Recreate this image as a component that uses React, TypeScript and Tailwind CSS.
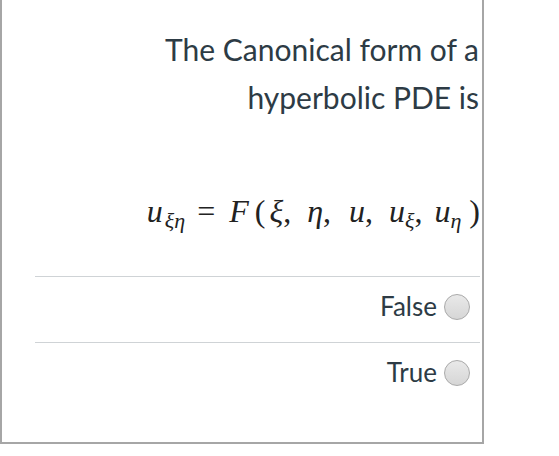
import React from 'react';

const sans = { fontFamily: 'Lato, "Open Sans", sans-serif' };

function Radio() {
  return (
    <span className="ml-[7px] mt-[2px] inline-block h-[26px] w-[26px] rounded-full border border-[#a9a9a9] bg-gradient-to-b from-[#e9e9e9] to-[#d6d6d6]" />
  );
}

function Option({ label }: { label: string }) {
  return (
    <div className="flex h-[66px] items-center justify-end border-t border-[#cfd3d6] pb-[8px] pr-[10px]">
      <span className="text-[26px] leading-none text-[#2d3b45]" style={sans}>
        {label}
      </span>
      <Radio />
    </div>
  );
}

export default function App() {
  return (
    <div className="h-[456px] w-[559px] bg-white">
      <div className="flex h-[444px] w-[484px] flex-col border-x-2 border-b-2 border-[#a6a6a6] bg-white">
        {/* Question text */}
        <div
          className="pr-[3px] pt-[25px] text-right text-[30px] leading-[48px] text-[#2d3b45]"
          style={sans}
        >
          <p>The Canonical form of a</p>
          <p>hyperbolic PDE is</p>
        </div>

        {/* Formula */}
        <div
          className="mt-[74px] flex items-baseline justify-end pr-[2px] text-[32px] italic leading-none text-[#222]"
          style={{ fontFamily: '"Liberation Serif", "DejaVu Serif", serif' }}
        >
          <span>u</span>
          <sub className="ml-[2px] text-[22px]">ξη</sub>
          <span className="ml-[12px] not-italic">=</span>
          <span className="ml-[14px]">F</span>
          <span className="ml-[6px] not-italic">(</span>
          <span className="ml-[4px]">ξ</span>
          <span className="not-italic">,</span>
          <span className="ml-[16px]">η</span>
          <span className="not-italic">,</span>
          <span className="ml-[18px]">u</span>
          <span className="not-italic">,</span>
          <span className="ml-[16px]">u</span>
          <sub className="text-[22px]">ξ</sub>
          <span className="not-italic">,</span>
          <span className="ml-[12px]">u</span>
          <sub className="text-[22px]">η</sub>
          <span className="ml-[8px] not-italic">)</span>
        </div>

        {/* Answers */}
        <div className="ml-[33px] mr-[2px] mt-[49px]">
          <Option label="False" />
          <Option label="True" />
        </div>
      </div>
    </div>
  );
}
